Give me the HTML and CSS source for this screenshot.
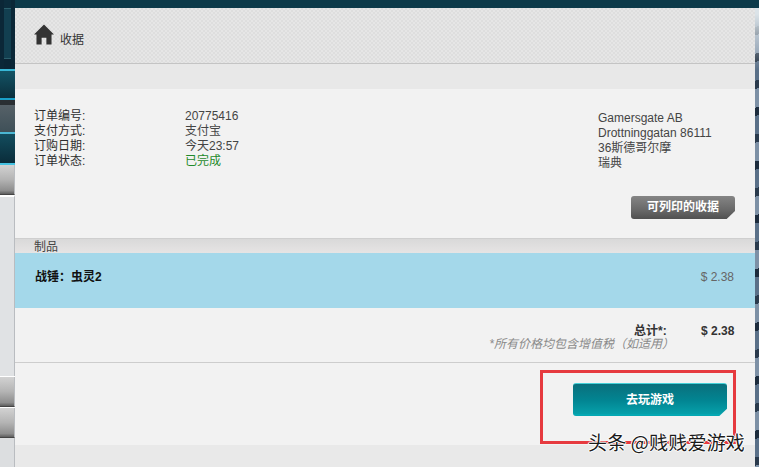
FILE: index.html
```html
<!DOCTYPE html>
<html lang="zh-CN">
<head>
<meta charset="utf-8">
<title>收据</title>
<link rel="stylesheet" href="styles.css">
</head>
<body>
<div class="stage">
  <div class="left-strip">
    <div class="ls ls-a"></div>
    <div class="ls ls-b"></div>
    <div class="ls ls-c"></div>
    <div class="ls ls-d"></div>
    <div class="ls ls-dark"></div>
    <div class="ls ls-e"></div>
    <div class="ls ls-f"></div>
    <div class="ls ls-g"></div>
    <div class="ls ls-h"></div>
    <div class="ls ls-i"></div>
    <div class="ls ls-j"></div>
    <div class="ls ls-white"></div>
    <div class="ls ls-i"></div>
    <div class="ls ls-white"></div>
    <div class="ls ls-i"></div>
    <div class="ls ls-k"></div>
  </div>
  <main class="panel">
    <header class="head">
      <svg class="home" width="20" height="21" viewBox="0 0 21 22"><path d="M10.5 0.5 L0 11 L2.6 11 L2.6 21.5 L8 21.5 L8 14.5 L13 14.5 L13 21.5 L18.4 21.5 L18.4 11 L21 11 Z" fill="#333"/></svg>
      <h1 class="title">收据</h1>
    </header>
    <div class="band"></div>
    <section class="info">
      <dl class="facts">
        <dt>订单编号:</dt><dd>20775416</dd>
        <dt>支付方式:</dt><dd>支付宝</dd>
        <dt>订购日期:</dt><dd>今天23:57</dd>
        <dt>订单状态:</dt><dd class="done">已完成</dd>
      </dl>
      <div class="side">
        <address class="addr">Gamersgate AB<br>Drottninggatan 86111<br>36斯德哥尔摩<br>瑞典</address>
        <a class="btn-print">可列印的收据</a>
      </div>
    </section>
    <div class="bar">制品</div>
    <div class="item"><span class="item-name">战锤：虫灵2</span><span class="item-price">$ 2.38</span></div>
    <section class="totals">
      <div class="total-row"><span class="total-label">总计*:</span><span class="total-value">$ 2.38</span></div>
      <div class="vat">*所有价格均包含增值税（如适用）</div>
    </section>
    <section class="actions"><a class="btn-play">去玩游戏</a></section>
    <div class="foot"></div>
  </main>
  <div class="right-strip"></div>
</div>
<div class="mark"></div>
<div class="watermark">头条 @贱贱爱游戏</div>
</body>
</html>
```

FILE: styles.css
```css
* { box-sizing: border-box; }
html, body { margin: 0; padding: 0; height: 100%; overflow: hidden; }
body {
  background: #0d3a4a;
  font-family: "Liberation Sans", "Noto Sans CJK SC", sans-serif;
  font-size: 12px;
  color: #3a3a3a;
}
.stage { display: flex; width: 759px; height: 467px; }

.left-strip { width: 15px; display: flex; flex-direction: column; flex: none; }
.ls { flex-shrink: 0; }
.ls-a {
  height: 69px;
  background:
    linear-gradient(#0b2c3c 0 8px, #2c5f6c 8px 9px, #123f50 9px 58px, #2c5f6c 58px 59px, #0a2535 59px) 4px 0 / 7px 100% no-repeat,
    #0b2737;
}
.ls-b { height: 2px; background: #38b7d6; }
.ls-c { height: 27px; background: linear-gradient(#135364, #0b2f3d); }
.ls-d { height: 2px; background: #1a9fc8; }
.ls-dark { height: 5px; background: #2a2f33; }
.ls-e { height: 27px; background: linear-gradient(#566168, #3f5058); }
.ls-f { height: 2px; background: #4bb6d2; }
.ls-g { height: 29px; background: linear-gradient(#134d5e, #0a2c3a); }
.ls-h { height: 2px; background: #45c2e2; }
.ls-i { height: 30px; background: linear-gradient(#d2d2d2, #b4b4b4 50%, #8e8e8e 88%, #5e5e5e); border-bottom: 1px solid #444; border-right: 1px solid #b9bcc0; }
.ls-j { height: 181px; background: #e0e2e4; border-top: 2px solid #fff; border-right: 1px solid #b9bcc0; }
.ls-white { height: 1px; background: #fff; }
.ls-k { flex: 1 1 0; background: #dcdee0; border-right: 1px solid #b9bcc0; }

.panel { width: 740px; flex: none; padding-top: 8px; display: flex; flex-direction: column; }
.head {
  height: 56px;
  padding: 16px 0 0 19px;
  display: flex;
  align-items: flex-start;
  gap: 6px;
  border-bottom: 1px solid #c4c4c4;
  background-color: #e2e2e2;
  background-image: repeating-conic-gradient(#dedede 0 25%, #e6e6e6 0 50%);
  background-size: 4px 4px;
}
.home { display: block; }
.title { margin: 8px 0 0; font-size: 12px; font-weight: 400; line-height: 16px; color: #333; }
.band { height: 25px; background: #e8e8e8; }

.info {
  height: 149px;
  background: #f2f2f2;
  padding: 20px 20px 0 19px;
  display: flex;
  justify-content: space-between;
}
.facts {
  margin: 0;
  display: grid;
  grid-template-columns: 151px auto;
  grid-auto-rows: 15px;
  line-height: 15px;
  align-content: start;
}
.facts dt { margin: 0; color: #2e2e2e; }
.facts dd { margin: 0; color: #444; }
.facts .done { color: #1f8a2b; }
.side { width: 137px; display: flex; flex-direction: column; }
.addr { font-style: normal; line-height: 15px; color: #444; margin-top: 2px; }
.btn-print {
  margin: 25px 0 0 33px;
  width: 104px;
  height: 23px;
  line-height: 23px;
  text-align: center;
  color: #fff;
  font-weight: 700;
  background: linear-gradient(#858585, #666 65%, #505050);
  border-radius: 3px;
  clip-path: polygon(0 0, 100% 0, 100% 65%, 92% 100%, 0 100%);
}

.bar {
  height: 15px;
  padding-left: 19px;
  line-height: 16px;
  color: #444;
  border-top: 1px solid #cfcfcf;
  background: linear-gradient(#d9d9d9, #e6e4e4);
}
.item {
  height: 55px;
  background: #a4d8ea;
  padding: 16px 21px 0 20px;
  display: flex;
  justify-content: space-between;
  line-height: 16px;
}
.item-name { font-weight: 700; color: #111; }
.item-price { color: #666; }

.totals {
  height: 55px;
  background: #f2f2f2;
  border-bottom: 1px solid #cdcdcd;
  padding: 16px 21px 0 0;
  display: flex;
  flex-direction: column;
  align-items: flex-end;
}
.total-row { display: flex; line-height: 14px; white-space: nowrap; }
.total-label { font-weight: 700; color: #333; width: 67px; }
.total-value { font-weight: 700; color: #333; width: 33px; text-align: right; }
.vat { margin-right: 60px; font-style: italic; color: #8a8a8a; line-height: 13px; white-space: nowrap; }

.actions {
  height: 82px;
  background: #f2f2f2;
  padding: 20px 28px 0 0;
  display: flex;
  justify-content: flex-end;
  align-items: flex-start;
}
.btn-play {
  width: 154px;
  height: 33px;
  line-height: 33px;
  text-align: center;
  color: #fff;
  font-weight: 700;
  border-radius: 3px;
  background: linear-gradient(#0a6f7c, #028592 55%, #06a0aa);
  border-top: 1px solid #45d0d8;
  border-bottom: 2px solid #05a8b3;
  clip-path: polygon(0 0, 100% 0, 100% 78%, 95% 100%, 0 100%);
}
.foot { flex: 1; background: #e9e9e9; }

.right-strip {
  flex: 1;
  background:
    linear-gradient(#0d3a4a 0 8px, #dbe3e8 8px 14px, transparent 70px),
    repeating-linear-gradient(165deg, #1d2c3d 0 8px, #5a7088 8px 26px, #2a3a4c 26px 34px, #7d90a5 34px 52px);
}

.mark {
  position: absolute;
  left: 540px;
  top: 370px;
  width: 196px;
  height: 74px;
  border: 3px solid #e63a3f;
}
.watermark {
  position: absolute;
  left: 588px;
  top: 429px;
  font-family: "Noto Sans CJK SC", sans-serif;
  font-size: 19px;
  line-height: 26px;
  letter-spacing: 0.2px;
  color: #1a1a1a;
  text-shadow: 1px 0 0 #fff, -1px 0 0 #fff, 0 1px 0 #fff, 0 -1px 0 #fff;
  white-space: nowrap;
}
```
